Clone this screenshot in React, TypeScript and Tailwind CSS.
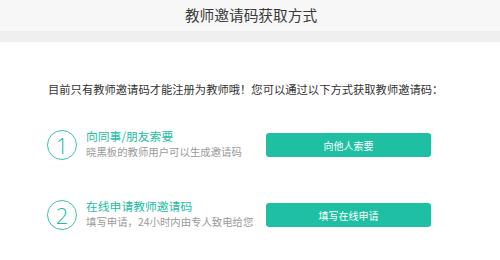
const TEAL = "text-[#23bca2]";

interface Way {
  num: string;
  title: string;
  desc: string;
  action: string;
}

const WAYS: Way[] = [
  {
    num: "1",
    title: "向同事/朋友索要",
    desc: "晓黑板的教师用户可以生成邀请码",
    action: "向他人索要",
  },
  {
    num: "2",
    title: "在线申请教师邀请码",
    desc: "填写申请，24小时内由专人致电给您",
    action: "填写在线申请",
  },
];

function WayRow({ way }: { way: Way }) {
  return (
    <div className="flex items-center">
      <div className="flex w-[219px] items-center">
        <div
          className={`flex h-[30px] w-[30px] shrink-0 items-center justify-center rounded-full border-[1.5px] border-[#3cc3ac] ${TEAL}`}
        >
          <span className="text-[22px] font-light leading-none [font-family:'Open_Sans','Noto_Sans',sans-serif]">
            {way.num}
          </span>
        </div>
        <div className="-mt-[3px] ml-[9px] flex flex-col self-start">
          <span className={`text-[11.8px] leading-[17px] ${TEAL}`}>{way.title}</span>
          <span className="text-[10.4px] leading-[15px] text-[#9a9a9a]">{way.desc}</span>
        </div>
      </div>
      <button className="flex h-[24px] w-[165px] items-center justify-center rounded-[3px] bg-[#1fbfa4] text-[10px] text-white">
        {way.action}
      </button>
    </div>
  );
}

export default function App() {
  return (
    <div className="h-[260px] w-[500px] bg-white [font-family:'Noto_Sans_CJK_SC','Noto_Sans',sans-serif]">
      <div className="flex h-[31px] items-center justify-center bg-[#f7f7f7] pl-[2px] text-[14.7px] text-[#3a3a3a]">
        教师邀请码获取方式
      </div>
      <div className="h-[11px] bg-[#efefef]" />

      <div className="px-[47px]">
        <p className="mt-[37px] ml-[1px] text-[11.3px] leading-[20px] text-[#333]">
          目前只有教师邀请码才能注册为教师哦！您可以通过以下方式获取教师邀请码：
        </p>
        <div className="mt-[31px] flex flex-col gap-[40px]">
          {WAYS.map((w) => (
            <WayRow key={w.num} way={w} />
          ))}
        </div>
      </div>
    </div>
  );
}
